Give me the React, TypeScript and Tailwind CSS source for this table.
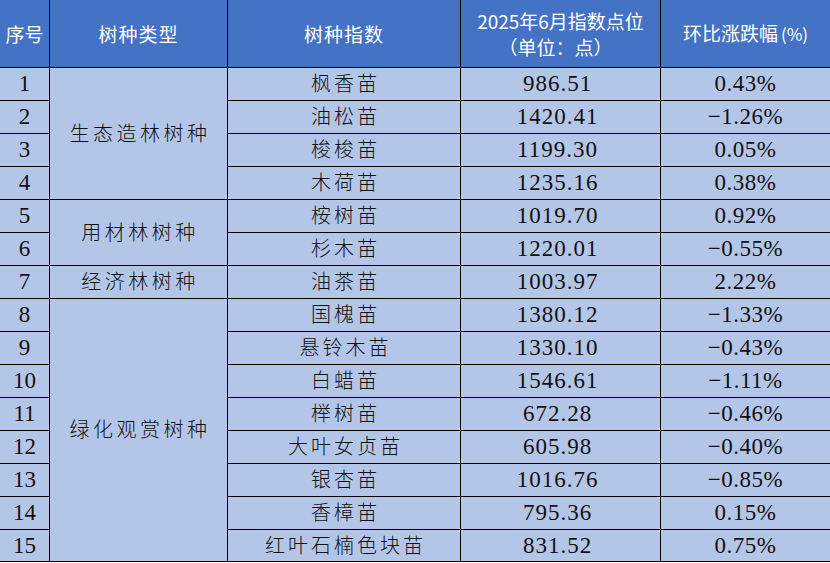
import React from "react";

const rows: [string, string, string, string][] = [
  ["1", "枫香苗", "986.51", "0.43%"],
  ["2", "油松苗", "1420.41", "−1.26%"],
  ["3", "梭梭苗", "1199.30", "0.05%"],
  ["4", "木荷苗", "1235.16", "0.38%"],
  ["5", "桉树苗", "1019.70", "0.92%"],
  ["6", "杉木苗", "1220.01", "−0.55%"],
  ["7", "油茶苗", "1003.97", "2.22%"],
  ["8", "国槐苗", "1380.12", "−1.33%"],
  ["9", "悬铃木苗", "1330.10", "−0.43%"],
  ["10", "白蜡苗", "1546.61", "−1.11%"],
  ["11", "榉树苗", "672.28", "−0.46%"],
  ["12", "大叶女贞苗", "605.98", "−0.40%"],
  ["13", "银杏苗", "1016.76", "−0.85%"],
  ["14", "香樟苗", "795.36", "0.15%"],
  ["15", "红叶石楠色块苗", "831.52", "0.75%"],
];

const groups: Record<number, { label: string; span: string }> = {
  0: { label: "生态造林树种", span: "row-span-4" },
  4: { label: "用材林树种", span: "row-span-2" },
  6: { label: "经济林树种", span: "row-span-1" },
  7: { label: "绿化观赏树种", span: "row-span-8" },
};

const head =
  "bg-[#4472C4] text-white flex flex-col items-center justify-center text-[19px] leading-[26px] font-['Noto_Sans_CJK_SC',sans-serif]";
const body =
  "bg-[#B4C6E7] text-[#111] flex items-center justify-center font-['Liberation_Serif','Noto_Sans_CJK_SC',serif]";

export default function App() {
  return (
    <div className="w-[830px] h-[563px] bg-white">
      <div className="border-b border-black w-[830px]">
        <div className="grid grid-cols-[49px_177px_232px_199px_169px] grid-rows-[67px_repeat(14,32px)_31px] gap-px bg-black">
          <div className={head}>序号</div>
          <div className={head}>
            <span className="tracking-[1px]">树种类型</span>
          </div>
          <div className={head}>
            <span className="tracking-[1px]">树种指数</span>
          </div>
          <div className={head}>
            <span>2025年6月指数点位</span>
            <span className="pr-[10px]">（单位：点）</span>
          </div>
          <div className={head}>
            <span>
              环比涨跌幅<span className="text-[17px] ml-[3px]">(%)</span>
            </span>
          </div>
          {rows.map((r, i) => (
            <React.Fragment key={i}>
              <div className={body + " text-[23px] pt-[1px]"}>{r[0]}</div>
              {groups[i] && (
                <div
                  className={
                    body +
                    " " +
                    groups[i].span +
                    " text-[20px] font-light tracking-[3.5px] pl-[3px]"
                  }
                >
                  {groups[i].label}
                </div>
              )}
              <div
                className={
                  body + " text-[20px] font-light tracking-[3px] pl-[3px]"
                }
              >
                {r[1]}
              </div>
              <div className={body + " text-[23px] tracking-[1px] pt-[1px] pr-[6px]"}>
                {r[2]}
              </div>
              <div className={body + " text-[23px] tracking-[0.5px] pt-[1px]"}>
                {r[3]}
              </div>
            </React.Fragment>
          ))}
        </div>
      </div>
    </div>
  );
}
